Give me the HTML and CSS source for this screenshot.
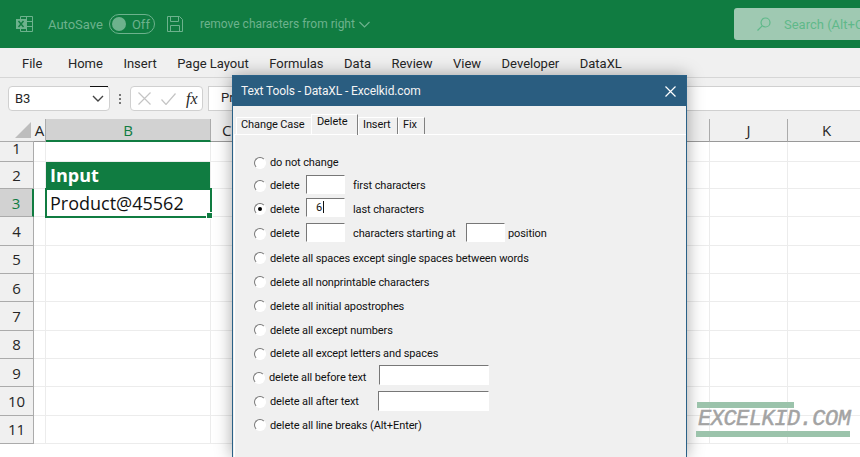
FILE: index.html
```html
<!DOCTYPE html>
<html lang="en">
<head>
    <meta charset="UTF-8">
    <title>Text Tools - DataXL</title>
    <link rel="stylesheet" href="styles.css">
</head>
<body>
    <div id="app">
        <header class="titlebar">
            <svg class="xl-icon" width="17" height="16" viewBox="0 0 17 16">
                <path d="M4.5 .5h12v15h-12zM4.5 5.5h12M4.5 10.5h12M10.5 .5v15" fill="none" stroke="#6db28d"/>
                <rect x="0" y="3" width="10" height="10" fill="#6db28d"/>
                <path d="M2.500 5l5 6M7.500 5l-5 6" stroke="#107c41" stroke-width="1.4"/>
            </svg>
            <span class="autosave">AutoSave</span>
            <span class="toggle"><span class="knob"></span>Off</span>
            <svg class="save-icon" width="16" height="16" viewBox="0 0 16 16" fill="none" stroke="#6db28d">
                <path d="M.5 .5h12l3 3v12H.5zM3.500 .5v5h8v-5M3.500 15.500v-6h9v6"/>
            </svg>
            <span class="doc-title">remove characters from right</span>
            <svg class="chevron" width="11" height="7" viewBox="0 0 11 7" fill="none" stroke="#6db28d" stroke-width="1.2">
                <path d="M.5 1l5 5 5-5"/>
            </svg>
            <div class="search">
                <svg width="14" height="14" viewBox="0 0 14 14" fill="none" stroke="#5fb98a" stroke-width="1.2">
                    <circle cx="8.500" cy="5.500" r="4.500"/>
                    <path d="M5.200 8.800L.5 13.500"/>
                </svg>
                <span>Search (Alt+Q)</span>
            </div>
        </header>

        <nav class="menubar">
            <span class="file-item">File</span>
            <span>Home</span>
            <span>Insert</span>
            <span>Page Layout</span>
            <span>Formulas</span>
            <span>Data</span>
            <span>Review</span>
            <span>View</span>
            <span>Developer</span>
            <span>DataXL</span>
        </nav>

        <div class="formula-row">
            <div class="name-box">
                <span>B3</span>
                <svg width="12" height="7" viewBox="0 0 12 7" fill="none" stroke="#444" stroke-width="1.4">
                    <path d="M1 1l5 5 5-5"/>
                </svg>
            </div>
            <span class="grip"></span>
            <div class="fx-box">
                <svg width="13" height="13" viewBox="0 0 13 13" fill="none" stroke="#c4c4c4" stroke-width="1.2">
                    <path d="M.5 .5l12 12M12.500 .5l-12 12"/>
                </svg>
                <svg width="15" height="12" viewBox="0 0 15 12" fill="none" stroke="#c4c4c4" stroke-width="1.2">
                    <path d="M.5 6.500l4.500 5L14.500 .5"/>
                </svg>
                <i class="fx">fx</i>
            </div>
            <div class="formula-input">Product@45562</div>
        </div>

        <div class="sheet">
            <div class="row col-heads">
                <div class="corner"><span class="corner-tri"></span></div>
                <div class="col-a">A</div>
                <div class="col-b selected-col">B</div>
                <div class="col-c">C</div>
                <div class="col-j">J</div>
                <div class="col-k">K</div>
            </div>
            <div class="row row-1"><div class="row-head">1</div><div class="col-a"></div><div class="col-b"></div><div class="col-c"></div><div class="col-j"></div><div class="col-k"></div></div>
            <div class="row row-2"><div class="row-head">2</div><div class="col-a"></div><div class="col-b cell-input">Input</div><div class="col-c"></div><div class="col-j"></div><div class="col-k"></div></div>
            <div class="row"><div class="row-head selected-row">3</div><div class="col-a"></div><div class="col-b cell-active">Product@45562<span class="fill-handle"></span></div><div class="col-c"></div><div class="col-j"></div><div class="col-k"></div></div>
            <div class="row"><div class="row-head">4</div><div class="col-a"></div><div class="col-b"></div><div class="col-c"></div><div class="col-j"></div><div class="col-k"></div></div>
            <div class="row"><div class="row-head">5</div><div class="col-a"></div><div class="col-b"></div><div class="col-c"></div><div class="col-j"></div><div class="col-k"></div></div>
            <div class="row"><div class="row-head">6</div><div class="col-a"></div><div class="col-b"></div><div class="col-c"></div><div class="col-j"></div><div class="col-k"></div></div>
            <div class="row"><div class="row-head">7</div><div class="col-a"></div><div class="col-b"></div><div class="col-c"></div><div class="col-j"></div><div class="col-k"></div></div>
            <div class="row"><div class="row-head">8</div><div class="col-a"></div><div class="col-b"></div><div class="col-c"></div><div class="col-j"></div><div class="col-k"></div></div>
            <div class="row"><div class="row-head">9</div><div class="col-a"></div><div class="col-b"></div><div class="col-c"></div><div class="col-j"></div><div class="col-k"></div></div>
            <div class="row"><div class="row-head">10</div><div class="col-a"></div><div class="col-b"></div><div class="col-c"></div><div class="col-j"></div><div class="col-k"></div></div>
            <div class="row"><div class="row-head">11</div><div class="col-a"></div><div class="col-b"></div><div class="col-c"></div><div class="col-j"></div><div class="col-k"></div></div>
        </div>
    </div>

    <div class="dialog">
        <div class="dialog-title">
            <span>Text Tools - DataXL - Excelkid.com</span>
            <svg width="11" height="11" viewBox="0 0 11 11" fill="none" stroke="#fff" stroke-width="1.2">
                <path d="M.5 .5l10 10M10.500 .5l-10 10"/>
            </svg>
        </div>
        <div class="tabs">
            <span class="tab tab-case">Change Case</span>
            <span class="tab tab-active">Delete</span>
            <span class="tab tab-insert">Insert</span>
            <span class="tab tab-fix">Fix</span>
        </div>
        <div class="panel">
            <div class="option"><span class="radio"></span><span>do not change</span></div>
            <div class="option"><span class="radio"></span><span class="lbl-delete">delete</span><span class="field"></span><span class="after-field">first characters</span></div>
            <div class="option"><span class="radio checked"></span><span class="lbl-delete">delete</span><span class="field field-value">6</span><span class="after-field">last characters</span></div>
            <div class="option"><span class="radio"></span><span class="lbl-delete">delete</span><span class="field"></span><span class="after-field lbl-start">characters starting at</span><span class="field"></span><span class="after-pos">position</span></div>
            <div class="option"><span class="radio"></span><span>delete all spaces except single spaces between words</span></div>
            <div class="option"><span class="radio"></span><span>delete all nonprintable characters</span></div>
            <div class="option"><span class="radio"></span><span>delete all initial apostrophes</span></div>
            <div class="option"><span class="radio"></span><span>delete all except numbers</span></div>
            <div class="option"><span class="radio"></span><span>delete all except letters and spaces</span></div>
            <div class="option option-before"><span class="radio"></span><span class="lbl-before">delete all before text</span><span class="field field-wide"></span></div>
            <div class="option"><span class="radio"></span><span class="lbl-after">delete all after text</span><span class="field field-wide field-wider"></span></div>
            <div class="option"><span class="radio"></span><span>delete all line breaks (Alt+Enter)</span></div>
        </div>
    </div>

    <div class="watermark">
        <div class="wm-bar wm-bar-short"></div>
        <div class="wm-text">EXCELKID.COM</div>
        <div class="wm-bar"></div>
    </div>
</body>
</html>
```

FILE: styles.css
```css
html, body {
    margin: 0;
    height: 100%;
    overflow: hidden;
}

body {
    position: relative;
    font-family: Roboto, "Open Sans", sans-serif;
    color: #262626;
    background: #fff;
}

#app {
    display: flex;
    flex-direction: column;
    height: 457px;
}

/* title bar */
.titlebar {
    display: flex;
    align-items: center;
    height: 48px;
    flex: none;
    padding-left: 16px;
    background: #107c41;
    color: #6db28d;
    font-size: 13px;
}

.autosave {
    margin-left: 15px;
}

.toggle {
    display: flex;
    align-items: center;
    box-sizing: border-box;
    width: 46px;
    height: 20px;
    margin-left: 6px;
    padding-left: 2px;
    border: 1px solid #6db28d;
    border-radius: 10px;
}

.knob {
    width: 14px;
    height: 14px;
    margin-right: 6px;
    border-radius: 50%;
    background: #6db28d;
}

.save-icon {
    margin-left: 12px;
}

.doc-title {
    margin-left: 17px;
    font-size: 12px;
}

.chevron {
    margin-left: 4px;
}

.search {
    display: flex;
    align-items: center;
    gap: 13px;
    box-sizing: border-box;
    width: 126px;
    height: 32px;
    margin-left: auto;
    padding-left: 23px;
    border-radius: 3px 0 0 3px;
    background: #9fc9b2;
    color: #5fb98a;
    white-space: nowrap;
    overflow: hidden;
}

.search svg {
    flex: none;
}

/* menu */
.menubar {
    display: flex;
    align-items: center;
    gap: 20.5px;
    height: 30px;
    flex: none;
    padding: 1px 0 0 22px;
    background: #f0f0f0;
    border-bottom: 1px solid #d6d6d6;
    font-size: 13px;
    box-sizing: border-box;
}

.file-item {
    margin-right: 5px;
}

/* formula row */
.formula-row {
    display: flex;
    align-items: center;
    height: 41px;
    flex: none;
    padding-left: 8px;
    background: #f0f0f0;
    font-size: 13px;
    box-sizing: border-box;
}

.name-box {
    position: relative;
    display: flex;
    align-items: center;
    justify-content: space-between;
    box-sizing: border-box;
    width: 102px;
    height: 25px;
    padding: 0 5px 0 6px;
    border: 1px solid #d0d0d0;
    border-radius: 4px;
    background: #fff;
}

.name-box::before {
    content: "";
    position: absolute;
    right: 1px;
    top: -1px;
    width: 18px;
    height: 1px;
    background: #111;
}

.grip {
    width: 2px;
    height: 10px;
    margin: 0 9px;
    background: repeating-linear-gradient(#777 0 2px, transparent 2px 4px);
}

.fx-box {
    display: flex;
    align-items: center;
    gap: 10px;
    box-sizing: border-box;
    width: 73px;
    height: 25px;
    padding-left: 7px;
    border: 1px solid #d0d0d0;
    border-radius: 4px;
    background: #fff;
}

.fx {
    font-family: "Liberation Serif", serif;
    font-size: 16px;
}

.formula-input {
    flex: 1;
    box-sizing: border-box;
    height: 25px;
    margin-left: 5px;
    padding: 3px 12px;
    border: 1px solid #d0d0d0;
    border-right: 0;
    background: #fff;
}

/* sheet */
.sheet {
    flex: 1;
    display: flex;
    flex-direction: column;
    background: #fff;
}

.row {
    display: flex;
    flex: none;
    height: 28.35px;
    box-sizing: border-box;
    font-family: "Open Sans", sans-serif;
    font-size: 15px;
}

.row > div {
    display: flex;
    align-items: center;
    justify-content: center;
    flex: none;
    box-sizing: border-box;
    border-right: 1px solid #ececec;
    border-bottom: 1px solid #ececec;
}

.row-head, .corner {
    width: 34px;
    background: #f0f0f0;
    border-right: 1px solid #ababab !important;
    border-bottom: 1px solid #ababab !important;
}

.row-1 {
    height: 20px;
}

.row-1 .row-head {
    align-items: flex-start;
    line-height: 13px;
}

.row-2 {
    height: 27px;
}

.col-a { width: 12px; }
.col-b { width: 165px; }
.col-c { width: 499px; }
.col-j { width: 78px; }
.col-k { width: 78px; }

.col-heads {
    height: 23px;
}

.col-heads > div {
    background: #f0f0f0;
    border-right-color: #ababab;
    border-bottom: 1px solid #999;
}

.col-heads .col-c {
    justify-content: flex-start;
    padding-left: 11px;
}

.corner {
    position: relative;
    border-right: 0 !important;
}

.corner-tri {
    position: absolute;
    right: 3px;
    bottom: 3px;
    border-style: solid;
    border-width: 0 0 16px 16px;
    border-color: transparent transparent #bdbdbd;
}

.selected-col {
    background: #d2d2d2 !important;
    color: #107c41;
    border-bottom: 2px solid #107c41 !important;
}

.selected-row {
    background: #d2d2d2;
    color: #107c41;
    border-right: 2px solid #107c41 !important;
}

.cell-input {
    justify-content: flex-start !important;
    padding-left: 4px;
    background: #107c41;
    color: #fff;
    font-size: 18px;
    font-weight: 700;
}

.row .cell-active {
    position: relative;
    justify-content: flex-start;
    width: 167px;
    height: 30px;
    margin: -1px -1px 0;
    padding-left: 3px;
    font-size: 18px;
    color: #111;
    background: #fff;
    border: 2px solid #107c41;
}

.fill-handle {
    position: absolute;
    right: -3px;
    bottom: -3px;
    width: 5px;
    height: 5px;
    background: #107c41;
    border: 1px solid #fff;
}

/* dialog */
.dialog {
    position: absolute;
    left: 232px;
    top: 75px;
    display: flex;
    flex-direction: column;
    box-sizing: border-box;
    width: 455px;
    height: 382px;
    border: 1px solid #2a6187;
    border-bottom: 0;
    background: #f0f0f0;
    box-shadow: 0 0 16px rgba(0, 0, 0, .35);
    font-size: 11px;
    letter-spacing: -.1px;
    color: #111;
}

.dialog-title {
    display: flex;
    align-items: center;
    justify-content: space-between;
    flex: none;
    height: 30px;
    padding: 0 10px 0 8px;
    background: #2a5d80;
    color: #f4f4f4;
    font-size: 12px;
    letter-spacing: -.1px;
}

.tabs {
    display: flex;
    align-items: flex-end;
    flex: none;
    height: 28px;
    padding-left: 3px;
}

.tab {
    box-sizing: border-box;
    height: 17px;
    padding: 0 0 0 4px;
    border-top: 1px solid #fff;
    border-left: 1px solid #fff;
    border-right: 1px solid #808080;
}

.tab-case { width: 75px; border-right: 0; }
.tab-active { width: 47px; height: 21px; position: relative; top: 1px; padding: 0 0 0 5px; }
.tab-insert { width: 40px; }
.tab-fix { width: 27px; }

.panel {
    flex: 1;
    display: grid;
    grid-template-rows: 23px 23px 24px 25px 24px 24px 24px 24px 23px 25px 23px 24px;
    align-content: start;
    padding: 16px 0 0 19px;
    margin-left: 1px;
    border-top: 1px solid #fff;
    border-left: 1px solid #fff;
}

.option {
    display: flex;
    align-items: center;
}

.radio {
    position: relative;
    box-sizing: border-box;
    width: 12px;
    height: 12px;
    margin-right: 4px;
    flex: none;
    border-radius: 50%;
    border: 1px solid #fff;
    border-top-color: #777;
    border-left-color: #777;
    background: #fff;
}

.checked::after {
    content: "";
    position: absolute;
    left: 3px;
    top: 3px;
    width: 4px;
    height: 4px;
    border-radius: 50%;
    background: #000;
}

.lbl-delete {
    width: 36px;
}

.field {
    box-sizing: border-box;
    width: 39px;
    height: 19px;
    margin-bottom: 3px;
    padding: 2px 0 0 9px;
    border: 1px solid #fff;
    border-top: 1px solid #777;
    border-left: 1px solid #777;
    background: #fff;
    flex: none;
}

.field-value::after {
    content: "";
    display: inline-block;
    width: 1px;
    height: 12px;
    margin-left: 1px;
    vertical-align: -2px;
    background: #111;
}

.after-field {
    margin-left: 8px;
}

.lbl-start {
    width: 113px;
}

.after-pos {
    margin-left: 3px;
}

.field-wide {
    width: 110px;
    height: 20px;
    margin-left: 10px;
    margin-bottom: 6px;
}

.field-wider {
    width: 111px;
    margin-bottom: 2px;
}

.option-before {
    margin-left: -1px;
}

.lbl-before {
    width: 100px;
    white-space: nowrap;
}

.lbl-after {
    width: 98px;
    white-space: nowrap;
}

/* watermark over the sheet */
.watermark {
    position: absolute;
    left: 696px;
    top: 402px;
    width: 154px;
}

.wm-bar {
    height: 6px;
    background: #9bc3ab;
}

.wm-bar-short {
    width: 97px;
    margin-left: 1px;
}

.wm-text {
    height: 23px;
    padding-left: 2px;
    font-family: "Liberation Mono", monospace;
    font-style: italic;
    font-size: 22px;
    letter-spacing: -.5px;
    line-height: 23px;
    color: #a3a3a3;
    -webkit-text-stroke: .5px #a3a3a3;
    white-space: nowrap;
}
```
